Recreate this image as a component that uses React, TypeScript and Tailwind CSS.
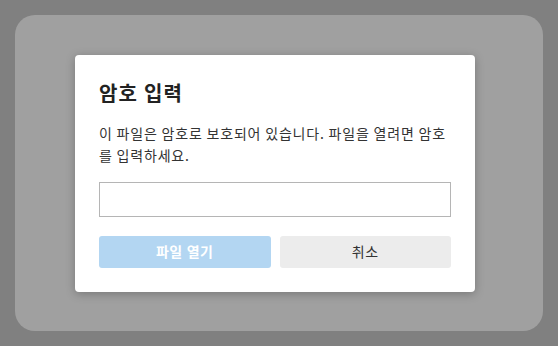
import React, { useState } from 'react';

const App: React.FC = () => {
  const [password, setPassword] = useState('');

  return (
    <div
      className="w-[558px] h-[346px] bg-[#808080] p-[15px]"
      style={{ fontFamily: '"Noto Sans CJK KR", "Noto Sans", sans-serif' }}
    >
      <div className="h-full rounded-[20px] bg-[#a0a0a0] flex items-center pl-[60px]">
        <div className="w-[400px] bg-white rounded-[4px] shadow-[0_2px_10px_rgba(0,0,0,0.25)] px-6 pt-6 pb-6">
          <h2 className="text-[20px] leading-[28px] font-bold tracking-[1.2px] text-[#222]">암호 입력</h2>
          <p className="mt-[15px] text-[14px] leading-[22px] tracking-[0.8px] text-[#333] break-all">
            이 파일은 암호로 보호되어 있습니다. 파일을 열려면 암호를 입력하세요.
          </p>
          <input
            type="password"
            value={password}
            onChange={(e) => setPassword(e.target.value)}
            className="mt-4 block w-full h-[35px] border border-[#b5b5b5] px-2 text-[14px] outline-none"
          />
          <div className="mt-[19px] flex gap-[9px]">
            <button
              disabled={!password}
              className="flex-1 h-8 rounded-[3px] bg-[#b3d6f2] text-white text-[14px] font-bold tracking-[0.6px]"
            >
              파일 열기
            </button>
            <button className="flex-1 h-8 rounded-[3px] bg-[#ececec] text-[#333] text-[14px] tracking-[0.6px]">
              취소
            </button>
          </div>
        </div>
      </div>
    </div>
  );
};

export default App;
